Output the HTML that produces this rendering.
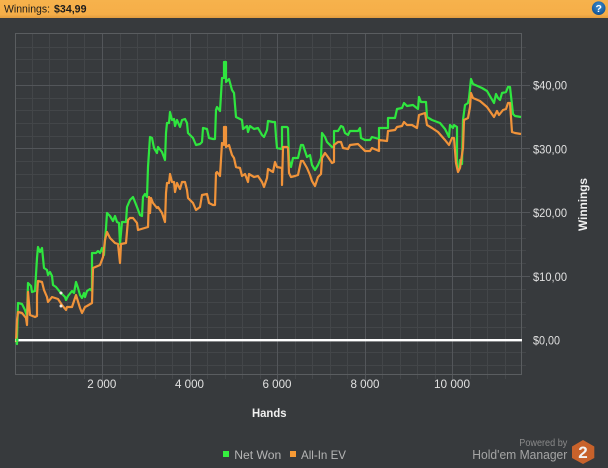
<!DOCTYPE html>
<html><head><meta charset="utf-8"><style>
html,body{margin:0;padding:0;width:608px;height:468px;overflow:hidden;background:#373a3d}
svg{position:absolute;left:0;top:0}
text{font-family:"Liberation Sans",sans-serif}
</style></head><body>
<svg width="608" height="468" viewBox="0 0 608 468" xmlns="http://www.w3.org/2000/svg">
<defs><linearGradient id="h" x1="0" y1="0" x2="0" y2="1"><stop offset="0" stop-color="#f6b24c"/><stop offset=".8" stop-color="#f5ae48"/><stop offset="1" stop-color="#e09c3e"/></linearGradient>
<radialGradient id="q" cx=".5" cy=".35" r=".7"><stop offset="0" stop-color="#3f8fd0"/><stop offset="1" stop-color="#0d4c8c"/></radialGradient></defs>
<rect width="608" height="468" fill="#373a3d"/>
<rect width="608" height="18" fill="url(#h)"/>
<text x="4" y="12.5" font-size="11" fill="#1c1c1c" textLength="46" lengthAdjust="spacingAndGlyphs">Winnings:</text>
<text x="54" y="12.5" font-size="11" font-weight="bold" fill="#1c1c1c" textLength="32.500" lengthAdjust="spacingAndGlyphs">$34,99</text>
<circle cx="598.7" cy="8.200" r="6.8" fill="url(#q)"/>
<text x="598.7" y="12" font-size="10.500" font-weight="bold" fill="#fff" text-anchor="middle">?</text>

<path d="M32.5 33.5V379M49.5 33.5V379M67.5 33.5V379M84.5 33.5V379M120.5 33.5V379M137.5 33.5V379M155.5 33.5V379M172.5 33.5V379M207.5 33.5V379M225.5 33.5V379M242.5 33.5V379M260.5 33.5V379M295.5 33.5V379M312.5 33.5V379M330.5 33.5V379M347.5 33.5V379M382.5 33.5V379M400.5 33.5V379M417.5 33.5V379M435.5 33.5V379M470.5 33.5V379M487.5 33.5V379M505.5 33.5V379M15.5 47.5H526M15.5 59.5H526M15.5 72.5H526M15.5 98.5H526M15.5 110.5H526M15.5 123.5H526M15.5 136.5H526M15.5 161.5H526M15.5 174.5H526M15.5 187.5H526M15.5 199.5H526M15.5 225.5H526M15.5 238.5H526M15.5 250.5H526M15.5 263.5H526M15.5 289.5H526M15.5 302.5H526M15.5 314.5H526M15.5 327.5H526M15.5 352.5H526M15.5 365.5H526" stroke="#434649" stroke-width="1" fill="none"/>
<path d="M102.5 33.5V381M190.5 33.5V381M277.5 33.5V381M365.5 33.5V381M452.5 33.5V381M15.5 85.5H530M15.5 148.5H530M15.5 212.5H530M15.5 276.5H530" stroke="#53565a" stroke-width="1" fill="none"/>
<rect x="15.5" y="33.5" width="506" height="341" fill="none" stroke="#5a5d60" stroke-width="1"/>

<path fill="none" stroke="#2fe63f" stroke-width="2.2" stroke-linejoin="round" d="M16 340L17 344L17 338L18 303L22 304L25 310L27 316L28 283L31 286L32 292L35 291L37 258L38 247L40 252L42 248L44 268L47 270L48 275L50 272L52 276L53 285L56 287L60 292L63 295L65 297L66 300L68 296L72 291L74 293L76 282L78 288L80 295L82 298L84 293L85 297L87 291L90 289L92 291L92 253L96 253L98 251L100 253L102 248L104 255L105 240L106 228L107 213L110 216L113 221L115 216L117 222L119 223L120 244L122 222L126 222L127 207L130 200L133 197L137 207L140 215L142 216L143 197L145 194L147 197L148 167L150 137L152 138L154 148L157 153L158 147L162 152L165 160L166 133L167 123L169 123L170 112L172 120L174 119L175 126L177 120L180 127L182 120L185 119L187 123L188 133L193 138L196 145L200 144L202 142L203 128L207 129L209 138L213 139L215 139L216 110L217 107L220 111L222 78L224 78L224 62L226 62L226 82L229 79L232 90L234 93L236 117L238 118L242 120L243 129L247 126L248 132L250 126L254 129L258 128L262 135L264 137L267 130L268 121L273 122L275 122L276 137L277 148L282 149L282 127L287 127L288 128L289 160L291 167L293 158L298 158L301 145L303 145L307 157L310 155L312 165L315 170L318 165L321 158L322 133L325 137L327 142L332 147L334 147L334 131L338 131L341 126L343 127L345 133L348 135L350 131L358 131L360 128L361 138L365 140L370 140L372 137L379 139L379 128L388 128L388 118L395 118L397 109L402 108L404 103L407 106L413 105L418 109L419 97L421 102L426 102L427 117L432 120L440 123L445 129L449 137L450 125L453 128L454 125L457 127L457 166L459 168L460 160L462 164L463 120L465 105L468 103L469 98L471 79L473 84L482 88L487 91L494 103L496 94L498 98L500 100L502 93L506 92L508 87L510 87L513 114L515 116L521 117"/>
<path fill="none" stroke="#f0933a" stroke-width="2.2" stroke-linejoin="round" d="M16 342L17 320L18 312L22 313L26 318L27 325L28 292L30 315L35 317L37 316L37 295L38 281L42 282L44 290L47 297L48 302L52 297L58 299L62 305L66 310L67 307L72 307L76 295L80 308L82 313L85 307L87 306L92 303L93 268L100 265L103 257L105 240L107 232L110 238L115 243L118 244L120 263L121 244L126 243L128 220L130 218L133 218L137 223L138 230L148 227L149 197L150 213L151 198L153 203L157 208L158 207L162 213L165 222L166 193L167 183L169 183L170 174L172 182L174 182L175 192L177 183L180 189L182 182L185 182L187 190L188 198L193 203L196 210L200 207L202 195L207 194L209 203L213 205L215 205L216 173L217 172L220 176L222 143L224 145L224 127L226 127L226 147L229 145L232 155L234 158L236 167L240 168L242 176L245 174L248 182L249 174L254 177L258 176L262 182L264 187L267 178L268 169L273 172L275 162L277 167L282 168L282 185L283 147L287 147L288 148L289 173L291 177L295 176L298 175L301 161L303 161L307 168L310 175L312 181L315 186L318 177L321 174L322 158L325 153L328 157L332 163L334 162L334 145L338 142L341 142L343 148L348 149L350 145L358 144L361 147L365 151L370 151L372 148L379 151L379 140L387 141L388 131L395 130L397 127L402 126L404 122L407 125L412 125L417 128L419 115L425 113L427 125L432 128L438 132L445 140L449 145L452 138L454 138L456 163L458 172L460 168L463 148L464 120L468 118L470 107L471 93L473 98L480 101L487 107L494 117L497 111L499 115L503 110L506 109L508 103L510 103L512 132L515 133L521 134"/>
<circle cx="61" cy="293" r="1.5" fill="#f2ece4"/><circle cx="61" cy="306" r="1.5" fill="#f2ece4"/>
<rect x="15" y="339" width="507" height="2.4" fill="#fff"/>
<circle cx="17" cy="340" r="1.6" fill="#2fe63f"/>

<g font-size="12" fill="#e0e0e0">
<text x="533" y="89.5" textLength="34" lengthAdjust="spacingAndGlyphs">$40,00</text><text x="533" y="153.5" textLength="34" lengthAdjust="spacingAndGlyphs">$30,00</text><text x="533" y="217" textLength="34" lengthAdjust="spacingAndGlyphs">$20,00</text><text x="533" y="281" textLength="34" lengthAdjust="spacingAndGlyphs">$10,00</text><text x="533" y="344.5" textLength="27" lengthAdjust="spacingAndGlyphs">$0,00</text>
<text x="87.3" y="388" textLength="29" lengthAdjust="spacingAndGlyphs">2 000</text><text x="175" y="388" textLength="29" lengthAdjust="spacingAndGlyphs">4 000</text><text x="262.5" y="388" textLength="29" lengthAdjust="spacingAndGlyphs">6 000</text><text x="350.5" y="388" textLength="29" lengthAdjust="spacingAndGlyphs">8 000</text><text x="434" y="388" textLength="36" lengthAdjust="spacingAndGlyphs">10 000</text>
</g>
<text x="252" y="417" font-size="12" font-weight="bold" fill="#f0f0f0" textLength="34.500" lengthAdjust="spacingAndGlyphs">Hands</text>
<text transform="translate(587,231) rotate(-90)" font-size="12" font-weight="bold" fill="#f0f0f0" textLength="53" lengthAdjust="spacingAndGlyphs">Winnings</text>

<rect x="223" y="451" width="6" height="6" fill="#35f03f"/>
<text x="234.3" y="459" font-size="12" fill="#b5b5b5" textLength="47" lengthAdjust="spacingAndGlyphs">Net Won</text>
<rect x="290" y="451" width="6" height="6" fill="#f79a35"/>
<text x="301" y="459" font-size="12" fill="#b5b5b5" textLength="45" lengthAdjust="spacingAndGlyphs">All-In EV</text>
<text x="519.3" y="446" font-size="10" fill="#8a8a8a" textLength="48" lengthAdjust="spacingAndGlyphs">Powered by</text>
<text x="472.3" y="459" font-size="13" fill="#a5a5a5" textLength="95" lengthAdjust="spacingAndGlyphs">Hold'em Manager</text>
<path d="M583 440L594.300 446.500V458L583 464L572 458V446.500Z" fill="#c8622b"/>
<text x="583" y="458" font-size="17" font-weight="bold" fill="#f2f2f2" text-anchor="middle">2</text>
</svg>
</body></html>
